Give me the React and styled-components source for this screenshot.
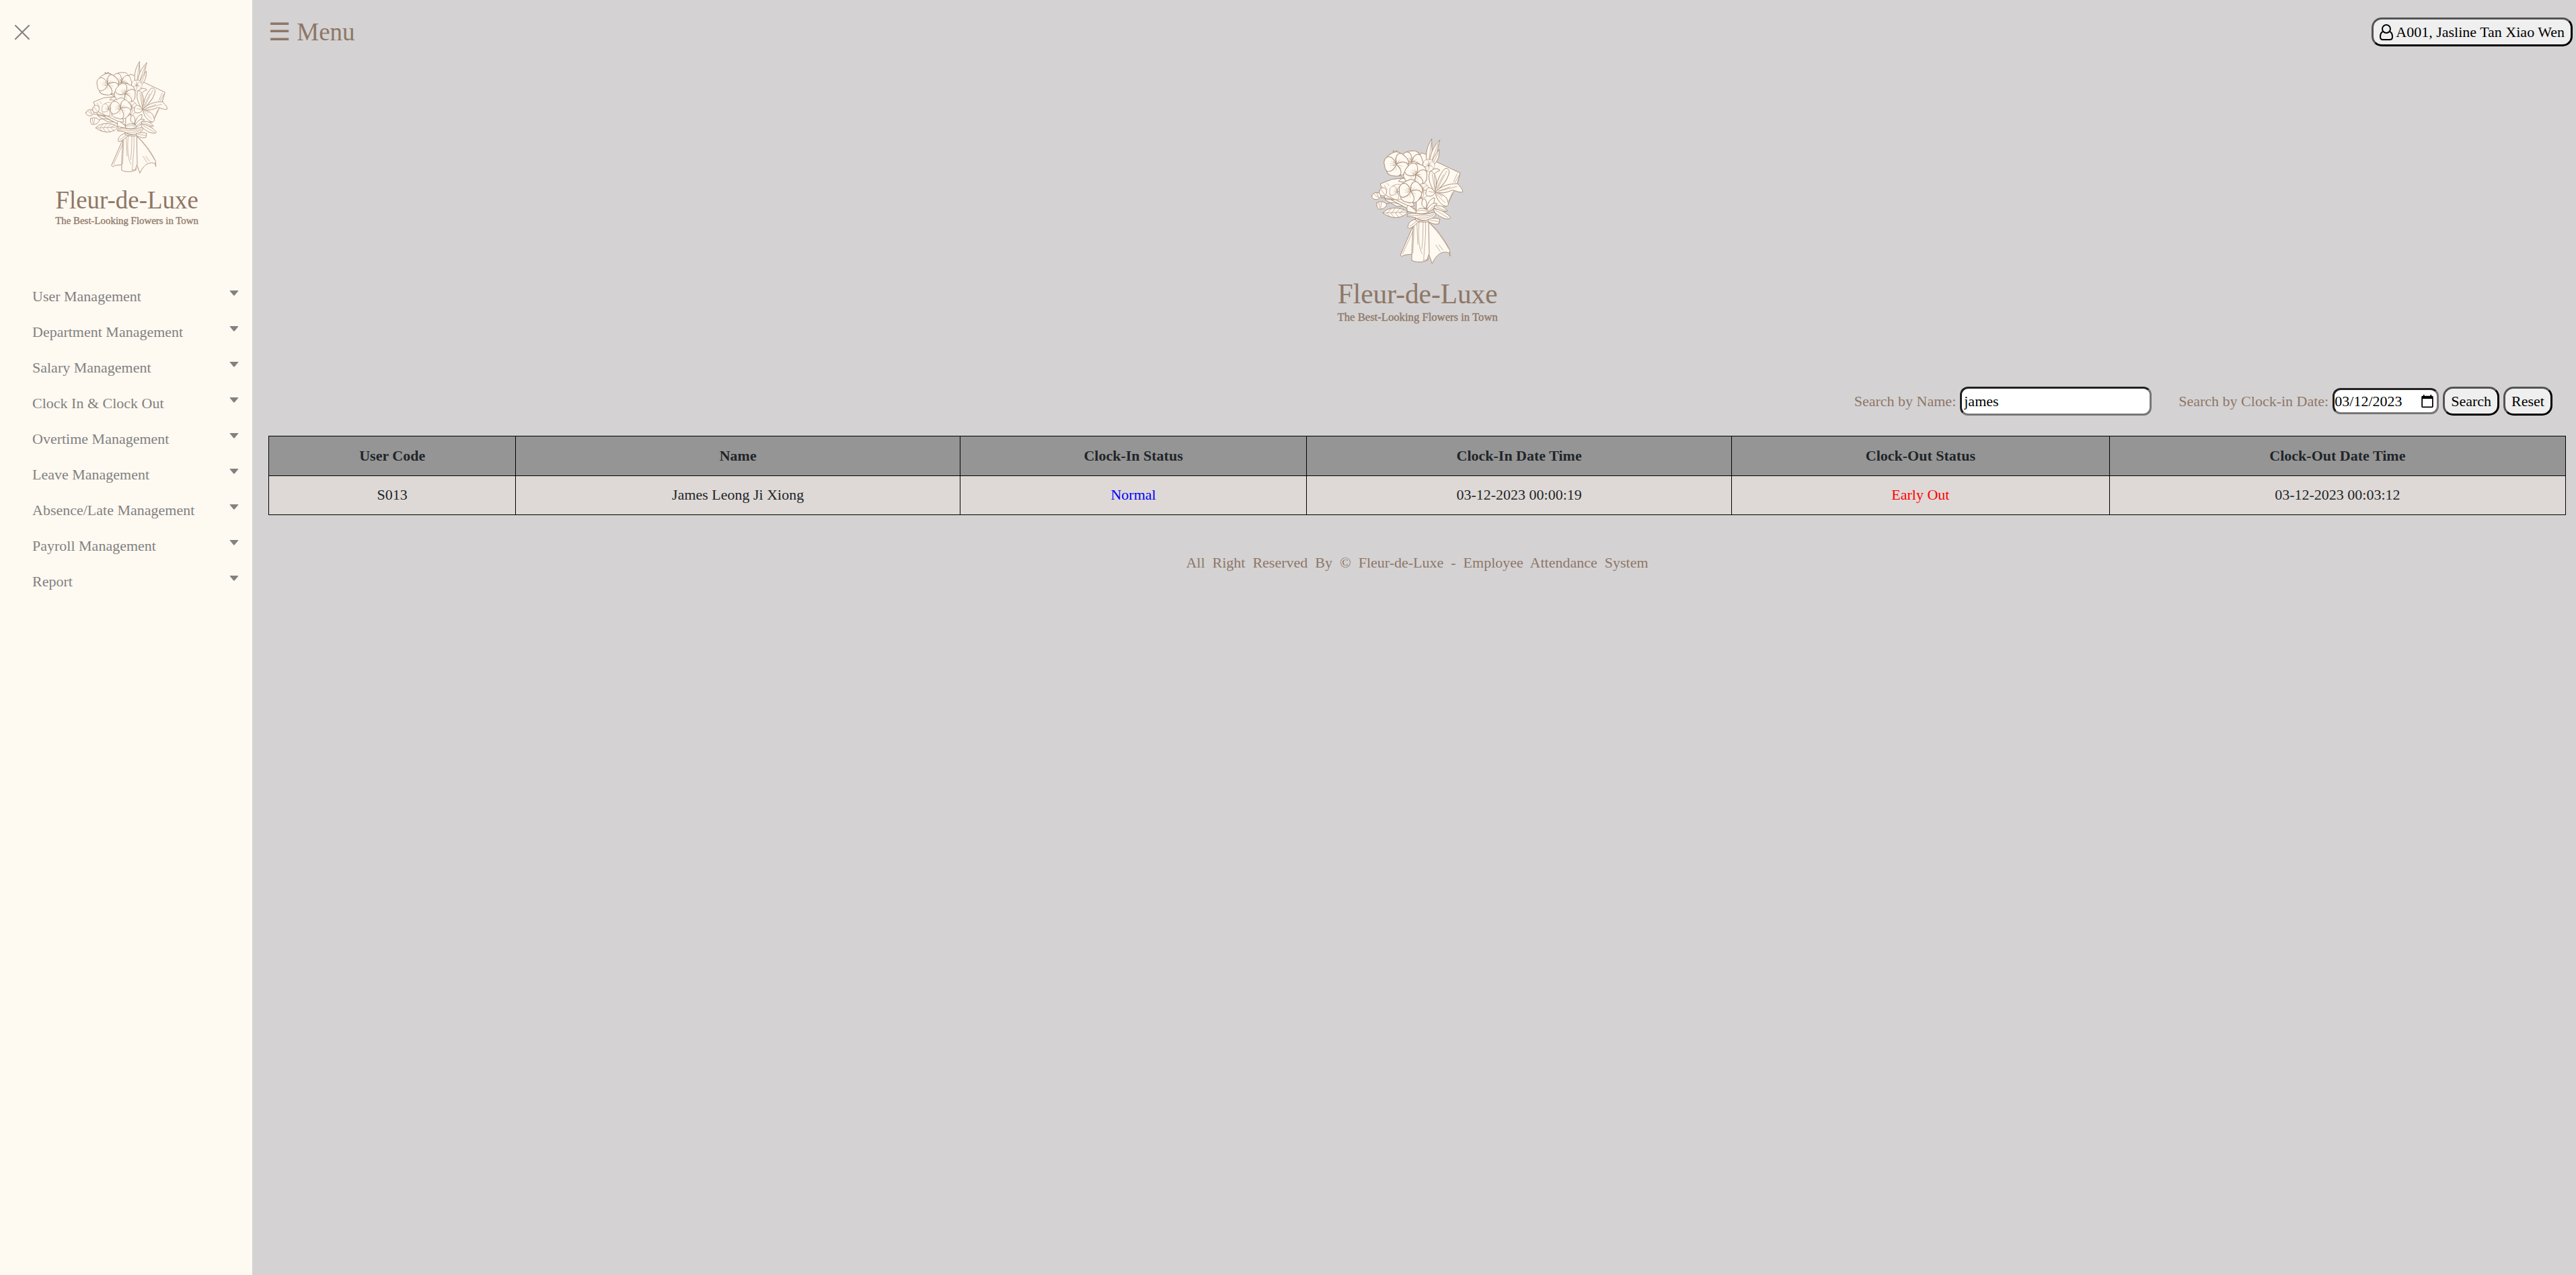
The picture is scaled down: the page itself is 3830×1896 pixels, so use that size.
import React from "react";
import styled, { createGlobalStyle } from "styled-components";

const color = {
  cream: "#fef9f1",
  page: "#d4d2d3",
  brown: "#8d7767",
  grey: "#818181",
  ink: "#212529",
  line: "#ab907c",
};

const GlobalStyle = createGlobalStyle`
  *, *::before, *::after { box-sizing: border-box; }
  body {
    margin: 0;
    background: ${color.page};
    color: ${color.ink};
    font-family: "Liberation Serif", "Times New Roman", Times, serif;
    font-size: 22px;
    line-height: 33px;
  }
  button, input { font: inherit; color: #000; }
`;

const Layout = styled.div`
  display: grid;
  grid-template-columns: 375px minmax(0, 1fr);
  min-height: 100vh;
`;

const Sidebar = styled.aside`
  display: flex;
  flex-direction: column;
  background: ${color.cream};
`;

const CloseButton = styled.button`
  align-self: flex-start;
  margin: 37px 0 0 22px;
  padding: 0;
  border: 0;
  background: none;
  line-height: 0;
  cursor: pointer;
`;

const LogoSvg = styled.svg`
  display: block;
  width: ${(p) => p.$size}px;
  height: ${(p) => p.$size}px;
  font-family: "Liberation Serif", "Times New Roman", serif;
`;

const SidebarBrand = styled.div`
  display: flex;
  justify-content: center;
  padding: 18px 0 69px;
`;

const Nav = styled.nav`
  display: flex;
  flex-direction: column;
`;

const NavItem = styled.button`
  display: flex;
  justify-content: space-between;
  align-items: center;
  height: 53px;
  padding: 0 20px 0 48px;
  border: 0;
  background: none;
  color: ${color.grey};
  text-align: left;
  cursor: pointer;
`;

const Caret = styled.svg`
  width: 14px;
  height: 8px;
  margin-bottom: 10px;
`;

const Main = styled.main`
  display: flex;
  flex-direction: column;
  padding: 0 15px 0 24px;
`;

const TopBar = styled.header`
  display: flex;
  justify-content: space-between;
  align-items: flex-start;
  padding-top: 26px;
  margin-right: -10px;
`;

const MenuButton = styled.button`
  padding: 0;
  border: 0;
  background: none;
  color: ${color.brown};
  font-size: 37px;
  line-height: 43px;
  cursor: pointer;
`;

const Button = styled.button`
  display: inline-flex;
  align-items: center;
  gap: 4px;
  height: 43px;
  padding: 0 9px;
  border: 3px outset #000;
  border-radius: 15px;
  background: #efefef;
  white-space: nowrap;
  cursor: pointer;
`;

const Brand = styled.div`
  display: flex;
  justify-content: center;
  padding: 121px 0 85px;
`;

const SearchForm = styled.form`
  display: flex;
  flex-wrap: wrap;
  justify-content: flex-end;
  align-items: center;
  gap: 6px;
  padding-right: 20px;
  color: ${color.brown};
`;

const Field = styled.div`
  display: flex;
  align-items: center;
  gap: 6px;
  margin-right: ${(p) => (p.$spaced ? 34 : 0)}px;
`;

const TextInput = styled.input`
  width: ${(p) => p.$width}px;
  height: ${(p) => p.$height}px;
  padding: 0 3px;
  border: 3px inset #767676;
  border-radius: 12px;
  background: #fff;
`;

const DateInput = styled(TextInput)`
  padding: 0 3px 0 0;
  &::-webkit-datetime-edit-fields-wrapper,
  &::-webkit-datetime-edit-month-field,
  &::-webkit-datetime-edit-day-field,
  &::-webkit-datetime-edit-year-field {
    padding: 0;
  }
  &::-webkit-calendar-picker-indicator {
    width: 22px;
    height: 22px;
    padding: 0;
    margin: 0;
  }
`;

const Table = styled.table`
  width: 100%;
  margin-top: 30px;
  border-collapse: collapse;
  table-layout: fixed;
  text-align: center;
`;

const Col = styled.col`
  width: ${(p) => p.$share}%;
`;

const HeadCell = styled.th`
  height: 59px;
  padding: 0 0 2px;
  border: 1px solid #000;
  background: #959595;
`;

const Cell = styled.td`
  height: 58px;
  padding: 0 0 2px;
  border: 1px solid #000;
  background: #ded9d6;
  color: ${(p) => p.$tone || color.ink};
`;

const Footer = styled.footer`
  margin-top: 54px;
  color: ${color.brown};
  text-align: center;
  white-space: pre-wrap;
`;

function Flower({ x, y, r, turn = 0, petals = 5 }) {
  const step = 360 / petals;
  return (
    <g transform={`translate(${x} ${y}) scale(${r / 50}) rotate(${turn})`}>
      {Array.from({ length: petals }, (_, i) => (
        <g key={i} transform={`rotate(${i * step})`}>
          <path d="M0 0C-16 -6 -36 -20 -31 -37C-27 -50 -12 -48 -3 -51C9 -56 28 -50 31 -36C34 -20 16 -6 0 0Z" />
          <path fill="none" strokeWidth="1" d="M-2 -8L-8 -24M1 -8L2 -28M4 -8L12 -22" />
        </g>
      ))}
      <path fill="none" strokeWidth="2" d="M0 0L-9 -15M0 0L5 -18M0 0L13 -9M0 0L-14 2M0 0L8 12" />
    </g>
  );
}

function Bouquet() {
  return (
    <g fill={color.cream} stroke={color.line} strokeWidth="3" strokeLinejoin="round" strokeLinecap="round">
      {/* wrapping paper */}
      <path d="M448 135L462 112L480 118L525 150L635 202L622 250L575 350L480 360L440 240Z" />
      <path d="M630 212L612 245M622 205L605 243M600 290L585 325" fill="none" strokeWidth="2" />
      <path d="M280 250L330 230L385 224L430 350L350 350L302 322Z" />
      <path d="M296 256L310 275M308 248L318 258" fill="none" strokeWidth="2" />
      {/* tall leaves */}
      <path d="M508 50C486 84 478 120 488 158L502 158C514 120 508 88 508 50Z" />
      <path d="M544 55C516 82 498 120 498 164L510 164C532 130 534 92 544 55Z" />
      <path d="M541 98C522 120 508 142 506 178C532 152 546 130 541 98Z" />
      <path d="M506 66L495 150M536 72L505 156M536 112L512 165" fill="none" strokeWidth="2" />
      <path d="M338 122L336 102L345 108L352 101L354 122Z" />
      <Flower x={494} y={168} r={26} turn={20} />
      <path d="M505 195C515 178 535 180 545 190C530 195 520 205 512 215Z" />
      {/* blossoms */}
      <Flower x={418} y={152} r={48} turn={12} />
      <Flower x={350} y={163} r={52} turn={-16} />
      <path d="M360 238C375 222 385 222 398 232L388 243Z M366 210L395 212L400 235Z" />
      <Flower x={436} y={210} r={50} turn={34} />
      <Flower x={468} y={280} r={30} turn={10} />
      <Flower x={354} y={287} r={33} turn={0} />
      <Flower x={414} y={284} r={50} turn={-8} />
      {/* filler foliage */}
      <path d="M440 330L462 312L478 345L470 375L440 372Z" />
      <path d="M465 345C460 325 470 315 478 318C490 335 486 350 480 360Z" />
      <path d="M485 360C490 335 500 318 520 312C524 335 506 350 498 362Z" />
      {/* lily */}
      <path d="M523 288C494 250 490 215 502 192C528 200 536 245 523 288Z" />
      <path d="M523 288C530 240 542 210 565 184C574 176 588 186 586 198C580 230 556 262 523 288Z" />
      <path d="M523 288C550 258 590 248 625 250C632 262 648 274 646 286C634 292 614 280 600 278C570 292 548 292 523 288Z" />
      <path d="M523 288C556 292 578 310 580 330C588 345 574 352 570 350C545 342 530 318 523 288Z" />
      <path d="M523 288C506 262 488 262 484 280C476 304 490 308 510 304Z" />
      <path d="M510 206L522 278M519 214L524 272M575 192L530 280M560 210L530 270M620 262L535 284M590 264L540 282M568 335L528 296M556 306L530 292M495 284L518 288M575 230C560 250 545 268 530 282" fill="none" strokeWidth="2" />
      {/* buds and their stems */}
      <path d="M300 318C345 318 390 345 425 374M305 340C340 325 370 340 410 370M282 312C320 310 375 335 440 372M300 298C330 318 350 325 380 340" fill="none" />
      <path d="M330 322L345 320L440 366L430 376Z" />
      <path d="M241 303C246 288 266 284 280 296C284 310 270 322 258 320C246 318 240 312 241 303Z" />
      <path d="M274 285C276 268 292 262 302 272C312 284 306 302 294 304C280 304 272 296 274 285Z" />
      <path d="M264 334C276 326 296 328 308 342C302 358 284 366 270 362C262 352 262 344 264 334Z" />
      <path d="M250 296L270 312M262 290L272 312M282 276L298 298M272 334L276 356M284 332L280 360" fill="none" strokeWidth="2" />
      {/* veined leaf */}
      <path d="M290 380C315 352 365 350 402 376C380 404 330 412 290 380Z" />
      <path d="M290 380L402 376M312 380L326 362M330 380L346 358M348 379L366 360M366 378L384 366M308 382L322 396M326 381L342 402M346 380L362 401M364 379L380 394" fill="none" strokeWidth="2" />
      {/* leaves above the knot */}
      <path d="M400 372C392 350 402 342 412 350C425 358 436 368 444 382Z" />
      <path d="M486 366C500 340 520 332 532 338C528 352 512 366 492 376Z" />
      <path d="M520 350C545 342 566 352 578 372C556 376 536 368 520 358Z" />
      <path d="M516 362C545 360 580 384 593 402C582 414 550 404 522 378Z" />
      <path d="M526 368L582 402M530 354L570 370M494 370L526 342" fill="none" strokeWidth="2" />
      <path d="M400 386C430 372 450 392 490 384C510 380 522 374 526 384C518 408 486 418 462 412C440 404 424 394 400 396Z" />
      <path d="M436 380C446 352 476 354 496 374C480 386 456 386 436 380Z" />
      <path d="M404 391C440 386 470 402 518 386M448 400C470 408 496 400 514 392M446 372C460 366 476 368 490 374" fill="none" strokeWidth="2" />
      {/* skirt of the wrapping */}
      <path d="M424 440L368 568L375 574L384 568L420 564L432 450Z" />
      <path d="M432 444L378 562" fill="none" strokeWidth="2" />
      <path d="M488 416C530 448 566 500 588 545L590 573L586 558C556 548 530 562 510 606L492 555Z" />
      <path d="M496 424C530 456 560 500 584 540M526 522L546 552M540 522L558 546" fill="none" strokeWidth="2" />
      <path d="M426 424C424 480 418 540 419 592C440 602 470 600 486 592L497 560L494 416Z" />
      <path d="M430 430L424 560M442 424L446 520M452 422C446 480 450 540 466 562M470 420L468 500L464 540M480 420C484 480 474 540 472 594M486 592L497 580M474 590L492 590" fill="none" strokeWidth="2" />
      {/* ribbon */}
      <path d="M442 408C418 408 400 426 402 446C410 456 430 436 452 418Z" />
      <path d="M488 412C505 400 530 402 544 408L540 428C520 434 504 424 488 416Z" />
      <path d="M436 402C455 418 480 418 494 408L490 420C470 422 450 420 438 414Z" />
      <path d="M410 440L442 416M500 412L538 418" fill="none" strokeWidth="2" />
    </g>
  );
}

function Logo({ size }) {
  return (
    <LogoSvg $size={size} viewBox="-7 0 900 900" role="img" aria-label="Fleur-de-Luxe logo">
      <Bouquet />
      <g fill={color.brown} textAnchor="middle">
        <text x="445" y="783" fontSize="124">Fleur-de-Luxe</text>
        <text x="445" y="860" fontSize="50" stroke={color.brown} strokeWidth="1">
          The Best-Looking Flowers in Town
        </text>
      </g>
    </LogoSvg>
  );
}

const menuItems = [
  "User Management",
  "Department Management",
  "Salary Management",
  "Clock In & Clock Out",
  "Overtime Management",
  "Leave Management",
  "Absence/Late Management",
  "Payroll Management",
  "Report",
];

const columns = [
  { title: "User Code", share: 10.76 },
  { title: "Name", share: 19.34 },
  { title: "Clock-In Status", share: 15.09 },
  { title: "Clock-In Date Time", share: 18.5 },
  { title: "Clock-Out Status", share: 16.45 },
  { title: "Clock-Out Date Time", share: 19.86 },
];

const records = [
  {
    code: "S013",
    name: "James Leong Ji Xiong",
    inStatus: "Normal",
    inTime: "03-12-2023 00:00:19",
    outStatus: "Early Out",
    outTime: "03-12-2023 00:03:12",
  },
];

const statusTone = { Normal: "blue", "Early Out": "red" };

export default function App() {
  return (
    <>
      <GlobalStyle />
      <Layout>
        <Sidebar>
          <CloseButton type="button" aria-label="Close menu">
            <svg width="22" height="22" viewBox="0 0 22 22" stroke={color.grey} strokeWidth="2" strokeLinecap="round">
              <path d="M1 1L21 21M21 1L1 21" />
            </svg>
          </CloseButton>
          <SidebarBrand>
            <Logo size={268} />
          </SidebarBrand>
          <Nav>
            {menuItems.map((item) => (
              <NavItem key={item} type="button">
                {item}
                <Caret viewBox="0 0 14 8" fill={color.grey} aria-hidden="true">
                  <path d="M1 0H13Q14 0 13 1L8 7Q7 8 6 7L1 1Q0 0 1 0Z" />
                </Caret>
              </NavItem>
            ))}
          </Nav>
        </Sidebar>

        <Main>
          <TopBar>
            <MenuButton type="button">☰ Menu</MenuButton>
            <Button type="button">
              <svg width="20" height="24" viewBox="0 0 20 24" fill="none" stroke="#000" strokeWidth="2" aria-hidden="true">
                <circle cx="10" cy="7" r="6" />
                <path d="M5 11C2 12 1 16 1 19C1 22 2 23 5 23H15C18 23 19 22 19 19C19 16 18 12 15 11" />
              </svg>
              A001, Jasline Tan Xiao Wen
            </Button>
          </TopBar>

          <Brand>
            <Logo size={300} />
          </Brand>

          <SearchForm onSubmit={(e) => e.preventDefault()}>
            <Field $spaced>
              <label htmlFor="name">Search by Name:</label>
              <TextInput id="name" type="text" defaultValue="james" $width={285} $height={43} />
            </Field>
            <Field>
              <label htmlFor="date">Search by Clock-in Date:</label>
              <DateInput id="date" type="date" defaultValue="2023-03-12" $width={158} $height={39} />
            </Field>
            <Button type="submit">Search</Button>
            <Button type="reset">Reset</Button>
          </SearchForm>

          <Table>
            <colgroup>
              {columns.map((c) => (
                <Col key={c.title} $share={c.share} />
              ))}
            </colgroup>
            <thead>
              <tr>
                {columns.map((c) => (
                  <HeadCell key={c.title} scope="col">{c.title}</HeadCell>
                ))}
              </tr>
            </thead>
            <tbody>
              {records.map((r) => (
                <tr key={r.code}>
                  <Cell>{r.code}</Cell>
                  <Cell>{r.name}</Cell>
                  <Cell $tone={statusTone[r.inStatus]}>{r.inStatus}</Cell>
                  <Cell>{r.inTime}</Cell>
                  <Cell $tone={statusTone[r.outStatus]}>{r.outStatus}</Cell>
                  <Cell>{r.outTime}</Cell>
                </tr>
              ))}
            </tbody>
          </Table>

          <Footer>
            {"All  Right  Reserved  By  ©  Fleur-de-Luxe  -  Employee  Attendance  System"}
          </Footer>
        </Main>
      </Layout>
    </>
  );
}
